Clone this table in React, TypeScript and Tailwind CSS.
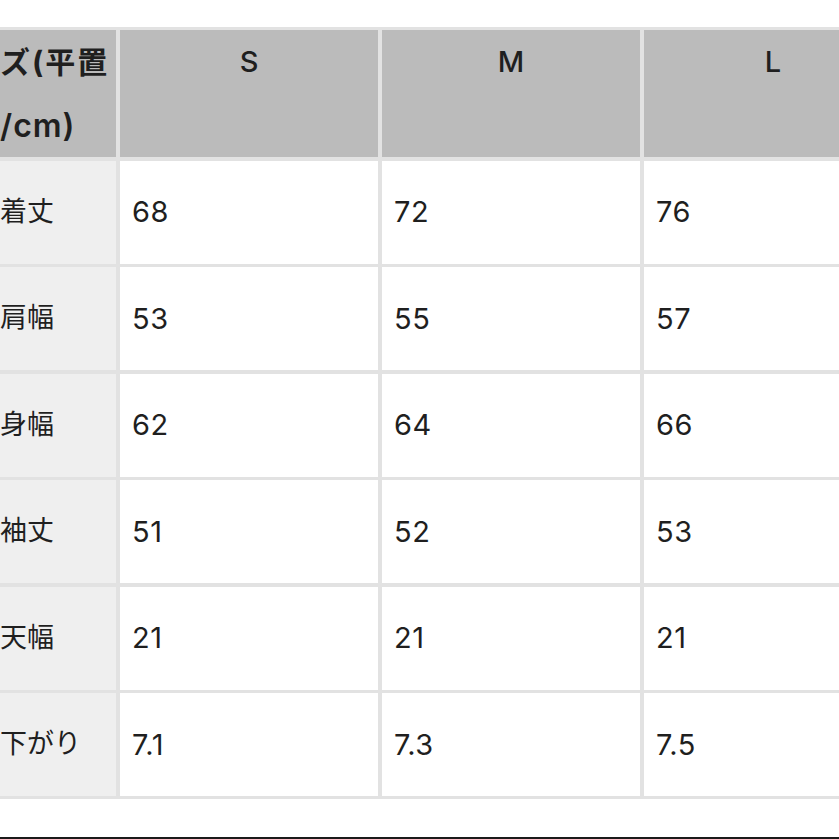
import React from "react";

const sizes = ["S", "M", "L"];

const rows: { label: string; values: string[] }[] = [
  { label: "着丈", values: ["68", "72", "76"] },
  { label: "肩幅", values: ["53", "55", "57"] },
  { label: "身幅", values: ["62", "64", "66"] },
  { label: "袖丈", values: ["51", "52", "53"] },
  { label: "天幅", values: ["21", "21", "21"] },
  { label: "下がり", values: ["7.1", "7.3", "7.5"] },
];

const font = { fontFamily: '"Inter", "Noto Sans CJK JP", sans-serif' };

const App: React.FC = () => {
  return (
    <div
      className="flex h-[839px] w-[839px] flex-col overflow-hidden bg-white text-[#1f1f1f]"
      style={font}
    >
      <div className="mt-[27px] w-[920px] bg-[#e2e2e2] pt-[3px] pb-[3px]">
        <div className="grid grid-cols-[116px_258px_258px_258px] grid-rows-[127px_repeat(6,103px)] gap-x-[4px] gap-y-[3.5px]">
          {/* header */}
          <div className="bg-[#bbbbbb] text-left text-[30px] font-bold leading-[64px]">
            <div className="tracking-[2px]">ズ(平置</div>
            <div className="text-[32px] font-semibold tracking-[1px]">/cm)</div>
          </div>
          {sizes.map((s) => (
            <div
              key={s}
              className="bg-[#bbbbbb] text-center text-[29px] font-medium leading-[64px]"
            >
              {s}
            </div>
          ))}

          {/* body */}
          {rows.map((r) => (
            <React.Fragment key={r.label}>
              <div className="flex items-center bg-[#efefef] text-[27px]">
                {r.label}
              </div>
              {r.values.map((v, i) => (
                <div
                  key={i}
                  className="flex items-center bg-white pl-[12px] text-[29px] tracking-[0.5px]"
                >
                  {v}
                </div>
              ))}
            </React.Fragment>
          ))}
        </div>
      </div>
      <div className="mt-[38px] h-[2px] w-full bg-[#1a1a1a]" />
    </div>
  );
};

export default App;
